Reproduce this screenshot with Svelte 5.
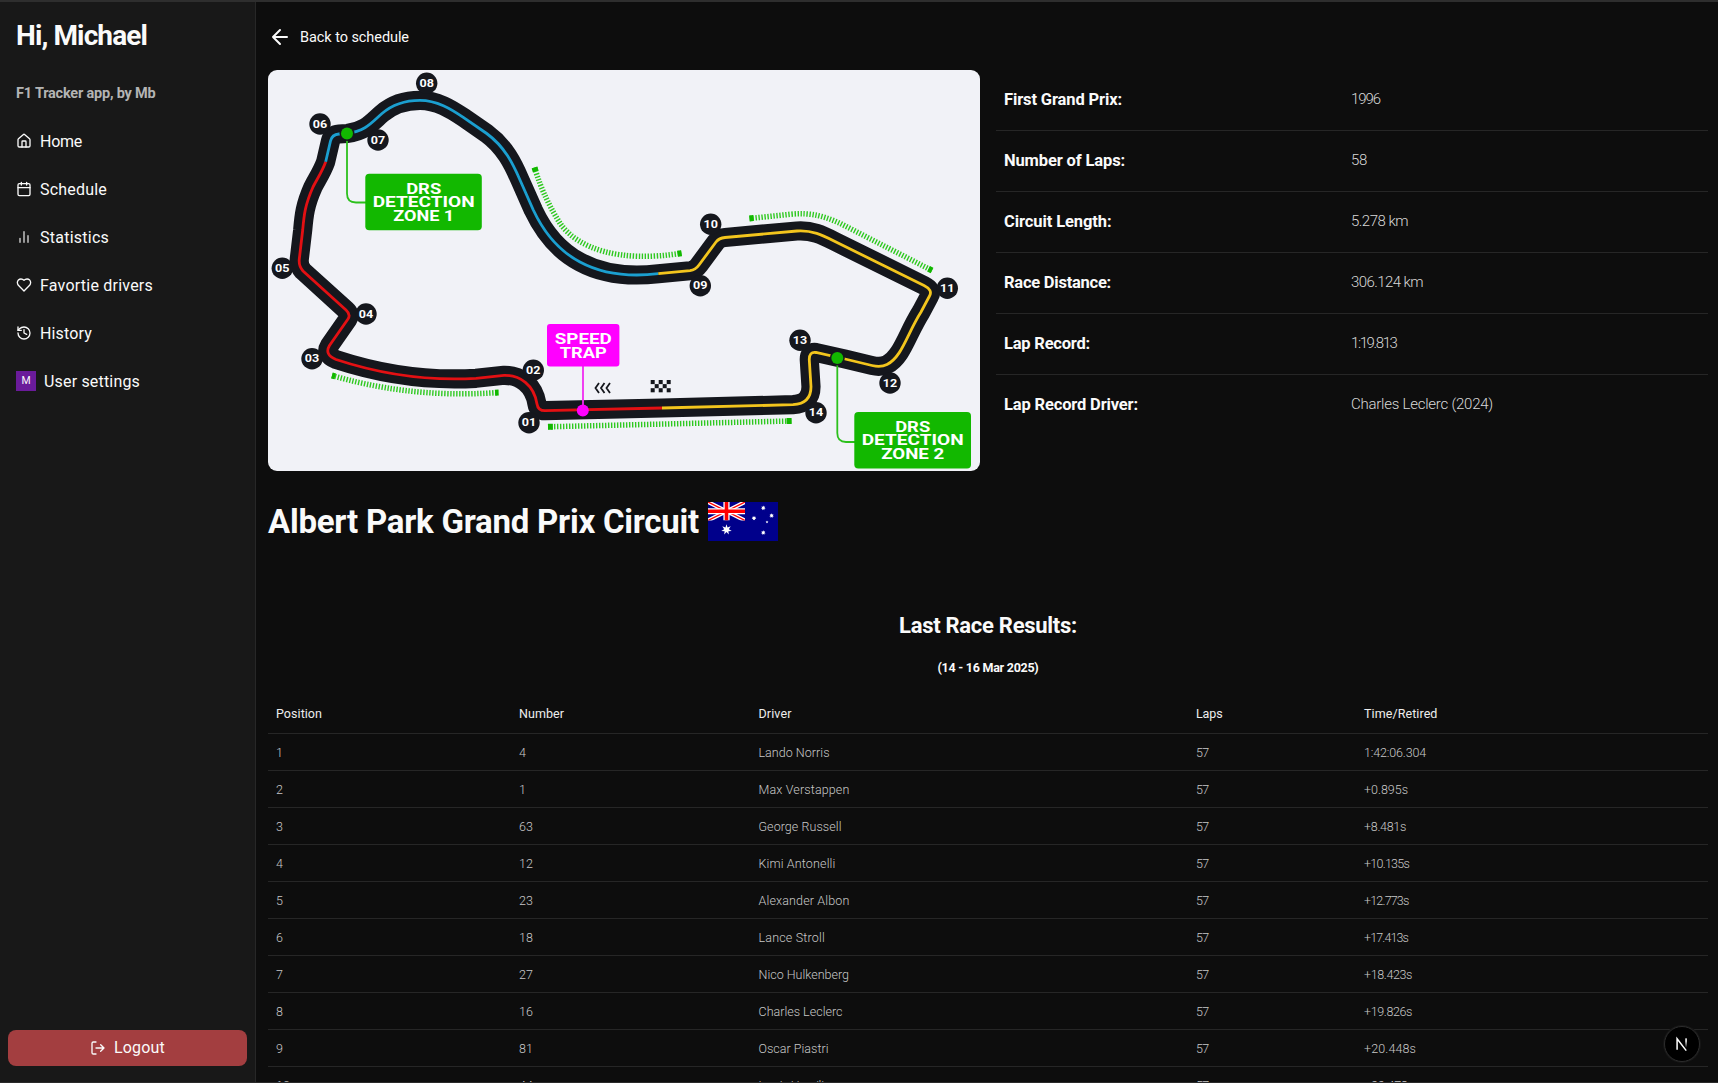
<script>
  // Spreads the letters of a label so that it fills the given width.
  function fit(node, width) {
    if (!width) return;
    const natural = node.getBoundingClientRect().width;
    node.style.letterSpacing = `${(width - natural) / node.textContent.length}px`;
  }

  const nav = [
    { label: 'Home', w: 42, icon: 'home' },
    { label: 'Schedule', w: 67, icon: 'calendar' },
    { label: 'Statistics', w: 69, icon: 'chart' },
    { label: 'Favortie drivers', w: 113, icon: 'heart' },
    { label: 'History', w: 52, icon: 'history' }
  ];

  const facts = [
    ['First Grand Prix:', 118, '1996', 29],
    ['Number of Laps:', 121, '58', 16],
    ['Circuit Length:', 107.5, '5.278 km', 57],
    ['Race Distance:', 107, '306.124 km', 72],
    ['Lap Record:', 86, '1:19.813', 45.5],
    ['Lap Record Driver:', 134, 'Charles Leclerc (2024)', 142]
  ];

  const heads = [['Position', 46], ['Number', 45], ['Driver', 33], ['Laps', 26.5], ['Time/Retired', 73.5]];

  const results = [
    ['4', 'Lando Norris', 71, '1:42:06.304', 62],
    ['1', 'Max Verstappen', 91, '+0.895s', 44],
    ['63', 'George Russell', 83, '+8.481s', 42],
    ['12', 'Kimi Antonelli', 77, '+10.135s', 45],
    ['23', 'Alexander Albon', 91, '+12.773s', 44.5],
    ['18', 'Lance Stroll', 66.5, '+17.413s', 44],
    ['27', 'Nico Hulkenberg', 90.5, '+18.423s', 48],
    ['16', 'Charles Leclerc', 84, '+19.826s', 48],
    ['81', 'Oscar Piastri', 70, '+20.448s', 52],
    ['44', 'Lewis Hamilton', 79, '+22.473s', 50]
  ];

  const sector3 = 'M658.3 273.7L690 270.7Q695.5 270 699 265L716 242Q719 238 725 237.5L797 231C812 230 822 235 835 241.5L924 285.5Q933 290 929.5 296L921 312C907 334 902 357 887 364.5Q881 367.5 872 365.5L845 359L816 352.5Q809 351.5 809.3 360L811 386.7Q811 403.5 793 404.7L662 408';
  const sector2 = 'M325.7 161.7L330.5 141Q332 134.5 339 134L347 133.5C366 131 372 122 382 113.5C394 103 408 100.3 420 100.3C437 100.3 451 109 463.3 117.3L486.7 133.5C505 147 513 164 520 180L533.3 210C546 237 563 253 580 262C604 275 630 277 658.3 273.7';
  const sector1 = 'M662 408L545 410.7Q538 410.7 537 404C534 385 520 375 504 375.3L476 378.3C430 381 380 374 336 359.5Q324 354.5 329.5 345.5L348 319Q351 314.5 346 310L303 271Q298.5 266 299.3 259L302.7 230C304 215 305 205 313 187C317 179 322 172 325.7 161.7';
  const road = sector2 + sector3.replace('M', 'L') + sector1.replace('M', 'L') + 'Z';

  const drs = [
    'M534.5 167.5C542 192 551 209 560 223.3C578 249 620 263 681.5 253.2',
    'M749.5 218.5L790 214.3C812 212 826 217 840 223.3L932 270.5',
    'M332 375.5C375 388 430 397.5 498.5 392.5',
    'M548 426.8L791.5 421'
  ];

  const turns = [
    ['01', 529, 422.7], ['02', 533.3, 370.3], ['03', 312, 358.7], ['04', 366, 314],
    ['05', 282.3, 268.3], ['06', 320, 124], ['07', 378, 140], ['08', 426.7, 83.3],
    ['09', 700.3, 285.7], ['10', 710.7, 224.3], ['11', 947.3, 288.3], ['12', 890, 383],
    ['13', 800, 340.3], ['14', 816, 412.7]
  ];

  const cells = [];
  for (let r = 0; r < 3; r++) for (let c = 0; c < 5; c++) if ((r + c) % 2 === 0) cells.push([650.7 + c * 4, 380 + r * 4.1]);

  function star(cx, cy, R, r, n) {
    let p = '';
    for (let i = 0; i < n * 2; i++) {
      const a = (Math.PI * i) / n - Math.PI / 2;
      const d = i % 2 ? r : R;
      p += `${(cx + d * Math.cos(a)).toFixed(2)},${(cy + d * Math.sin(a)).toFixed(2)} `;
    }
    return p;
  }
</script>

<div class="app">
  <aside>
    <h2><span use:fit={131}>Hi, Michael</span></h2>
    <p class="tag"><span use:fit={139.5}>F1 Tracker app, by Mb</span></p>
    <nav>
      {#each nav as n}
        <a class="item">
          <svg class="ico" class:thin={n.icon === 'chart'} viewBox="0 0 24 24">
            {#if n.icon === 'home'}
              <path d="M15 21v-8a1 1 0 0 0-1-1h-4a1 1 0 0 0-1 1v8" /><path d="M3 10a2 2 0 0 1 .709-1.528l7-5.999a2 2 0 0 1 2.582 0l7 5.999A2 2 0 0 1 21 10v9a2 2 0 0 1-2 2H5a2 2 0 0 1-2-2z" />
            {:else if n.icon === 'calendar'}
              <path d="M8 2v4M16 2v4M3 10h18" /><rect width="18" height="18" x="3" y="4" rx="2" />
            {:else if n.icon === 'chart'}
              <path d="M18 20V10M12 20V4M6 20v-6" />
            {:else if n.icon === 'heart'}
              <path d="M19 14c1.49-1.46 3-3.21 3-5.5A5.5 5.5 0 0 0 16.5 3c-1.76 0-3 .5-4.5 2-1.5-1.5-2.74-2-4.5-2A5.5 5.5 0 0 0 2 8.5c0 2.3 1.5 4.05 3 5.5l7 7Z" />
            {:else}
              <path d="M3 12a9 9 0 1 0 9-9 9.75 9.75 0 0 0-6.74 2.74L3 8" /><path d="M3 3v5h5M12 7v5l4 2" />
            {/if}
          </svg>
          <span use:fit={n.w}>{n.label}</span>
        </a>
      {/each}
      <a class="item"><b class="avatar">M</b><span use:fit={96}>User settings</span></a>
    </nav>
    <button class="logout">
      <svg class="ico" viewBox="0 0 24 24"><path d="M9 21H5a2 2 0 0 1-2-2V5a2 2 0 0 1 2-2h4M16 17l5-5-5-5M21 12H9" /></svg>
      <span use:fit={51}>Logout</span>
    </button>
  </aside>

  <main>
    <a class="back">
      <svg class="arrow" viewBox="0 0 24 24"><path d="M12 19l-7-7 7-7M19 12H5" /></svg>
      <span use:fit={109}>Back to schedule</span>
    </a>

    <section class="overview">
      <svg class="map" viewBox="268 70 712 401" preserveAspectRatio="none">
        <rect x="268" y="70" width="712" height="401" fill="#f1f2f7" />
        <path d={road} class="road" />
        <path d={sector1} class="line red" />
        <path d={sector2} class="line blue" />
        <path d={sector3} class="line yellow" />
        {#each drs as d}
          <path {d} class="drs" />
          <path {d} class="drs-end" pathLength="100" />
        {/each}
        {#each turns as [t, x, y]}
          <circle cx={x} cy={y} r="10.7" fill="#15171d" />
          <text {x} y={y + 3.5} class="turn" textLength="14.4" lengthAdjust="spacingAndGlyphs">{t}</text>
        {/each}
        <path d="M347 134V193.500Q347 202.500 356 202.500H366" class="lead green" />
        <path d="M837.300 358V433Q837.300 442 846 442H855" class="lead green" />
        <path d="M583 366V410" class="lead pink" />
        <circle cx="347" cy="133.500" r="7.500" fill="#15171d" /><circle cx="347" cy="133.500" r="6" fill="#12b800" />
        <circle cx="837.300" cy="358" r="7.500" fill="#15171d" /><circle cx="837.300" cy="358" r="6" fill="#12b800" />
        <circle cx="582.800" cy="410.500" r="6" fill="#f0f" />
        <rect x="365.300" y="173.700" width="116.500" height="56.600" rx="4" fill="#12b800" />
        <rect x="854.300" y="412" width="116.700" height="56.500" rx="4" fill="#12b800" />
        <rect x="547" y="324" width="72.400" height="42.400" rx="3" fill="#f0f" />
        <g class="sign">
          <text x="423.700" y="193.800" textLength="35" lengthAdjust="spacingAndGlyphs">DRS</text>
          <text x="423.700" y="207.300" textLength="102" lengthAdjust="spacingAndGlyphs">DETECTION</text>
          <text x="423.700" y="220.900" textLength="61" lengthAdjust="spacingAndGlyphs">ZONE 1</text>
          <text x="912.700" y="431.800" textLength="35" lengthAdjust="spacingAndGlyphs">DRS</text>
          <text x="912.700" y="445.300" textLength="102" lengthAdjust="spacingAndGlyphs">DETECTION</text>
          <text x="912.700" y="458.900" textLength="63" lengthAdjust="spacingAndGlyphs">ZONE 2</text>
          <text x="583.300" y="344.300" textLength="57" lengthAdjust="spacingAndGlyphs">SPEED</text>
          <text x="583.300" y="358" textLength="47" lengthAdjust="spacingAndGlyphs">TRAP</text>
        </g>
        <path d="M599 383l-3.500 5 3.500 5M604.500 383l-3.500 5 3.500 5M610 383l-3.500 5 3.500 5" class="chev" />
        {#each cells as [x, y]}<rect {x} {y} width="4" height="4.100" fill="#15171d" />{/each}
      </svg>

      <div class="facts">
        {#each facts as [k, kw, v, vw]}
          <div class="fact"><strong><span use:fit={kw}>{k}</span></strong><em><span use:fit={vw}>{v}</span></em></div>
        {/each}
      </div>
    </section>

    <h1>
      <span use:fit={431}>Albert Park Grand Prix Circuit</span>
      <svg class="flag" viewBox="0 0 70 39">
        <rect width="70" height="39" fill="#00008b" />
        <svg width="37" height="18.500" viewBox="0 0 37 18.500">
          <path d="M0 0L37 18.500M37 0L0 18.500" stroke="#fff" stroke-width="4" />
          <path d="M0 0L37 18.500M37 0L0 18.500" stroke="#f00" stroke-width="1.300" />
          <path d="M18.500 0V18.500M0 9.250H37" stroke="#fff" stroke-width="6.200" />
          <path d="M18.500 0V18.500M0 9.250H37" stroke="#f00" stroke-width="3.600" />
        </svg>
        <polygon points={star(18.5, 27.7, 5.4, 2.4, 7)} fill="#fff" />
        <polygon points={star(55.3, 6, 2.4, 1.3, 7)} fill="#fff" />
        <polygon points={star(46, 16.2, 2.4, 1.3, 7)} fill="#fff" />
        <polygon points={star(63.6, 13.7, 2.4, 1.3, 7)} fill="#fff" />
        <polygon points={star(55.3, 30.7, 2.4, 1.3, 7)} fill="#fff" />
        <polygon points={star(59, 20, 1.5, 0.7, 5)} fill="#fff" />
      </svg>
    </h1>

    <h3><span use:fit={178}>Last Race Results:</span></h3>
    <p class="dates"><span use:fit={101}>(14 - 16 Mar 2025)</span></p>

    <div class="table">
      <div class="row head">
        {#each heads as [h, w]}<div><span use:fit={w}>{h}</span></div>{/each}
      </div>
      {#each results as [num, name, nw, time, tw], i}
        <div class="row">
          <div>{i + 1}</div>
          <div>{num}</div>
          <div><span use:fit={nw}>{name}</span></div>
          <div><span use:fit={12.5}>57</span></div>
          <div><span use:fit={tw}>{time}</span></div>
        </div>
      {/each}
    </div>
  </main>

  <div class="badge">
    <svg viewBox="0 0 36 36">
      <defs><linearGradient id="fade" x1="0" y1="0" x2="0" y2="1"><stop offset="0.3" stop-color="#fff" /><stop offset="1" stop-color="#fff" stop-opacity="0" /></linearGradient></defs>
      <path d="M12.800 24V12.500L22.500 25" fill="none" stroke="#fff" stroke-width="1.600" />
      <rect x="21.500" y="12" width="1.600" height="10" fill="url(#fade)" />
    </svg>
  </div>
</div>

<style>
  :global(body) { background: #0d0d0d; overflow: hidden; }
  .app {
    box-sizing: border-box;
    display: flex;
    width: 1718px;
    height: 1083px;
    overflow: hidden;
    border-top: 2px solid #2e2e2e;
    border-bottom: 1px solid #2a2a2a;
    background: #0d0d0d;
    color: #fafafa;
    font-family: Roboto, "Liberation Sans", sans-serif;
  }
  h1, h2, h3, p { margin: 0; }
  span { white-space: nowrap; }
  aside {
    box-sizing: border-box;
    flex: none;
    display: flex;
    flex-direction: column;
    width: 256px;
    padding: 18px 8px 16px;
    background: #181818;
    border-right: 1px solid #272727;
  }
  h2 { padding-left: 8px; font-size: 28px; line-height: 32px; font-weight: 700; }
  .tag { padding: 34px 0 0 8px; font-size: 14.5px; line-height: 16px; font-weight: 700; color: #b4b4b4; height: 16px; }
  nav { display: flex; flex-direction: column; padding-top: 15px; }
  .item { display: flex; align-items: center; gap: 8px; height: 48px; padding-left: 8px; font-size: 16px; }
  .ico { width: 16px; height: 16px; fill: none; stroke: currentColor; stroke-width: 2; stroke-linecap: round; stroke-linejoin: round; }
  .thin { opacity: 0.85; }
  .avatar { width: 20px; height: 20px; background: #6a1b9a; font: 400 10.5px/20px Roboto, sans-serif; text-align: center; }
  .logout {
    display: flex;
    align-items: center;
    justify-content: center;
    gap: 8px;
    height: 36px;
    margin-top: auto;
    padding: 0 0 1px;
    border: 0;
    border-radius: 8px;
    background: #a33e40;
    color: #fafafa;
    font: 400 16px Roboto, sans-serif;
  }
  main { flex: 1; min-width: 0; padding: 0 10px 0 12px; }
  .back { display: flex; align-items: center; gap: 8px; height: 68px; padding-top: 2px; box-sizing: border-box; font-size: 14.5px; }
  .arrow { width: 24px; height: 24px; fill: none; stroke: currentColor; stroke-width: 2; stroke-linecap: round; stroke-linejoin: round; }
  .overview { display: flex; gap: 16px; }
  .map { flex: 1; height: 401px; border-radius: 9px; }
  .road { fill: none; stroke: #15171d; stroke-width: 19.2; stroke-linejoin: round; }
  .line { fill: none; stroke-width: 2.8; }
  .red { stroke: #e31013; }
  .blue { stroke: #1b9fd0; }
  .yellow { stroke: #f3c51d; }
  .drs { fill: none; stroke: #2fc920; stroke-width: 5.5; stroke-dasharray: 1.4 1.6; }
  .drs-end { fill: none; stroke: #12b800; stroke-width: 6; stroke-dasharray: 2 96 2 0; }
  .turn { font: 700 10.2px Roboto, sans-serif; fill: #fff; text-anchor: middle; }
  .sign { font: 700 15px Roboto, sans-serif; fill: #fff; text-anchor: middle; }
  .lead { fill: none; stroke-width: 1.8; }
  .green { stroke: #2cc01c; }
  .pink { stroke: #f02cf0; }
  .chev { fill: none; stroke: #15171d; stroke-width: 1.8; }
  .facts { flex: 1; }
  .fact { box-sizing: border-box; display: grid; grid-template-columns: 347px 1fr; align-items: center; height: 61px; padding: 0 8px 2px; border-bottom: 1px solid #262626; }
  .fact:last-child { border-bottom-color: transparent; }
  strong { font-size: 16.5px; font-weight: 700; }
  em { font-size: 15px; font-weight: 300; font-style: normal; color: #d8d8d8; }
  h1 { display: flex; align-items: center; gap: 9px; height: 40px; margin-top: 30px; font-size: 33px; font-weight: 700; }
  .flag { width: 70px; height: 39px; }
  h3 { margin-top: 69px; height: 32px; line-height: 32px; font-size: 22px; font-weight: 700; text-align: center; }
  .dates { margin-top: 18px; height: 16px; font-size: 12.5px; line-height: 16px; font-weight: 700; text-align: center; }
  .table { margin-top: 18px; }
  .row { display: grid; grid-template-columns: 243px 239.500px 437.500px 168px 1fr; align-items: center; height: 36px; padding: 0 8px; border-bottom: 1px solid #262626; font-size: 12.5px; font-weight: 300; color: #c8c8c8; }
  .head { height: 39px; font-weight: 400; color: #ededed; }
  .badge { position: absolute; left: 1664px; top: 1026px; width: 36px; height: 36px; box-sizing: border-box; border: 1px solid #2c2c2c; border-radius: 50%; background: #000; box-shadow: 0 0 0 1px #171717; }
  .badge svg { display: block; width: 34px; height: 34px; }
</style>
